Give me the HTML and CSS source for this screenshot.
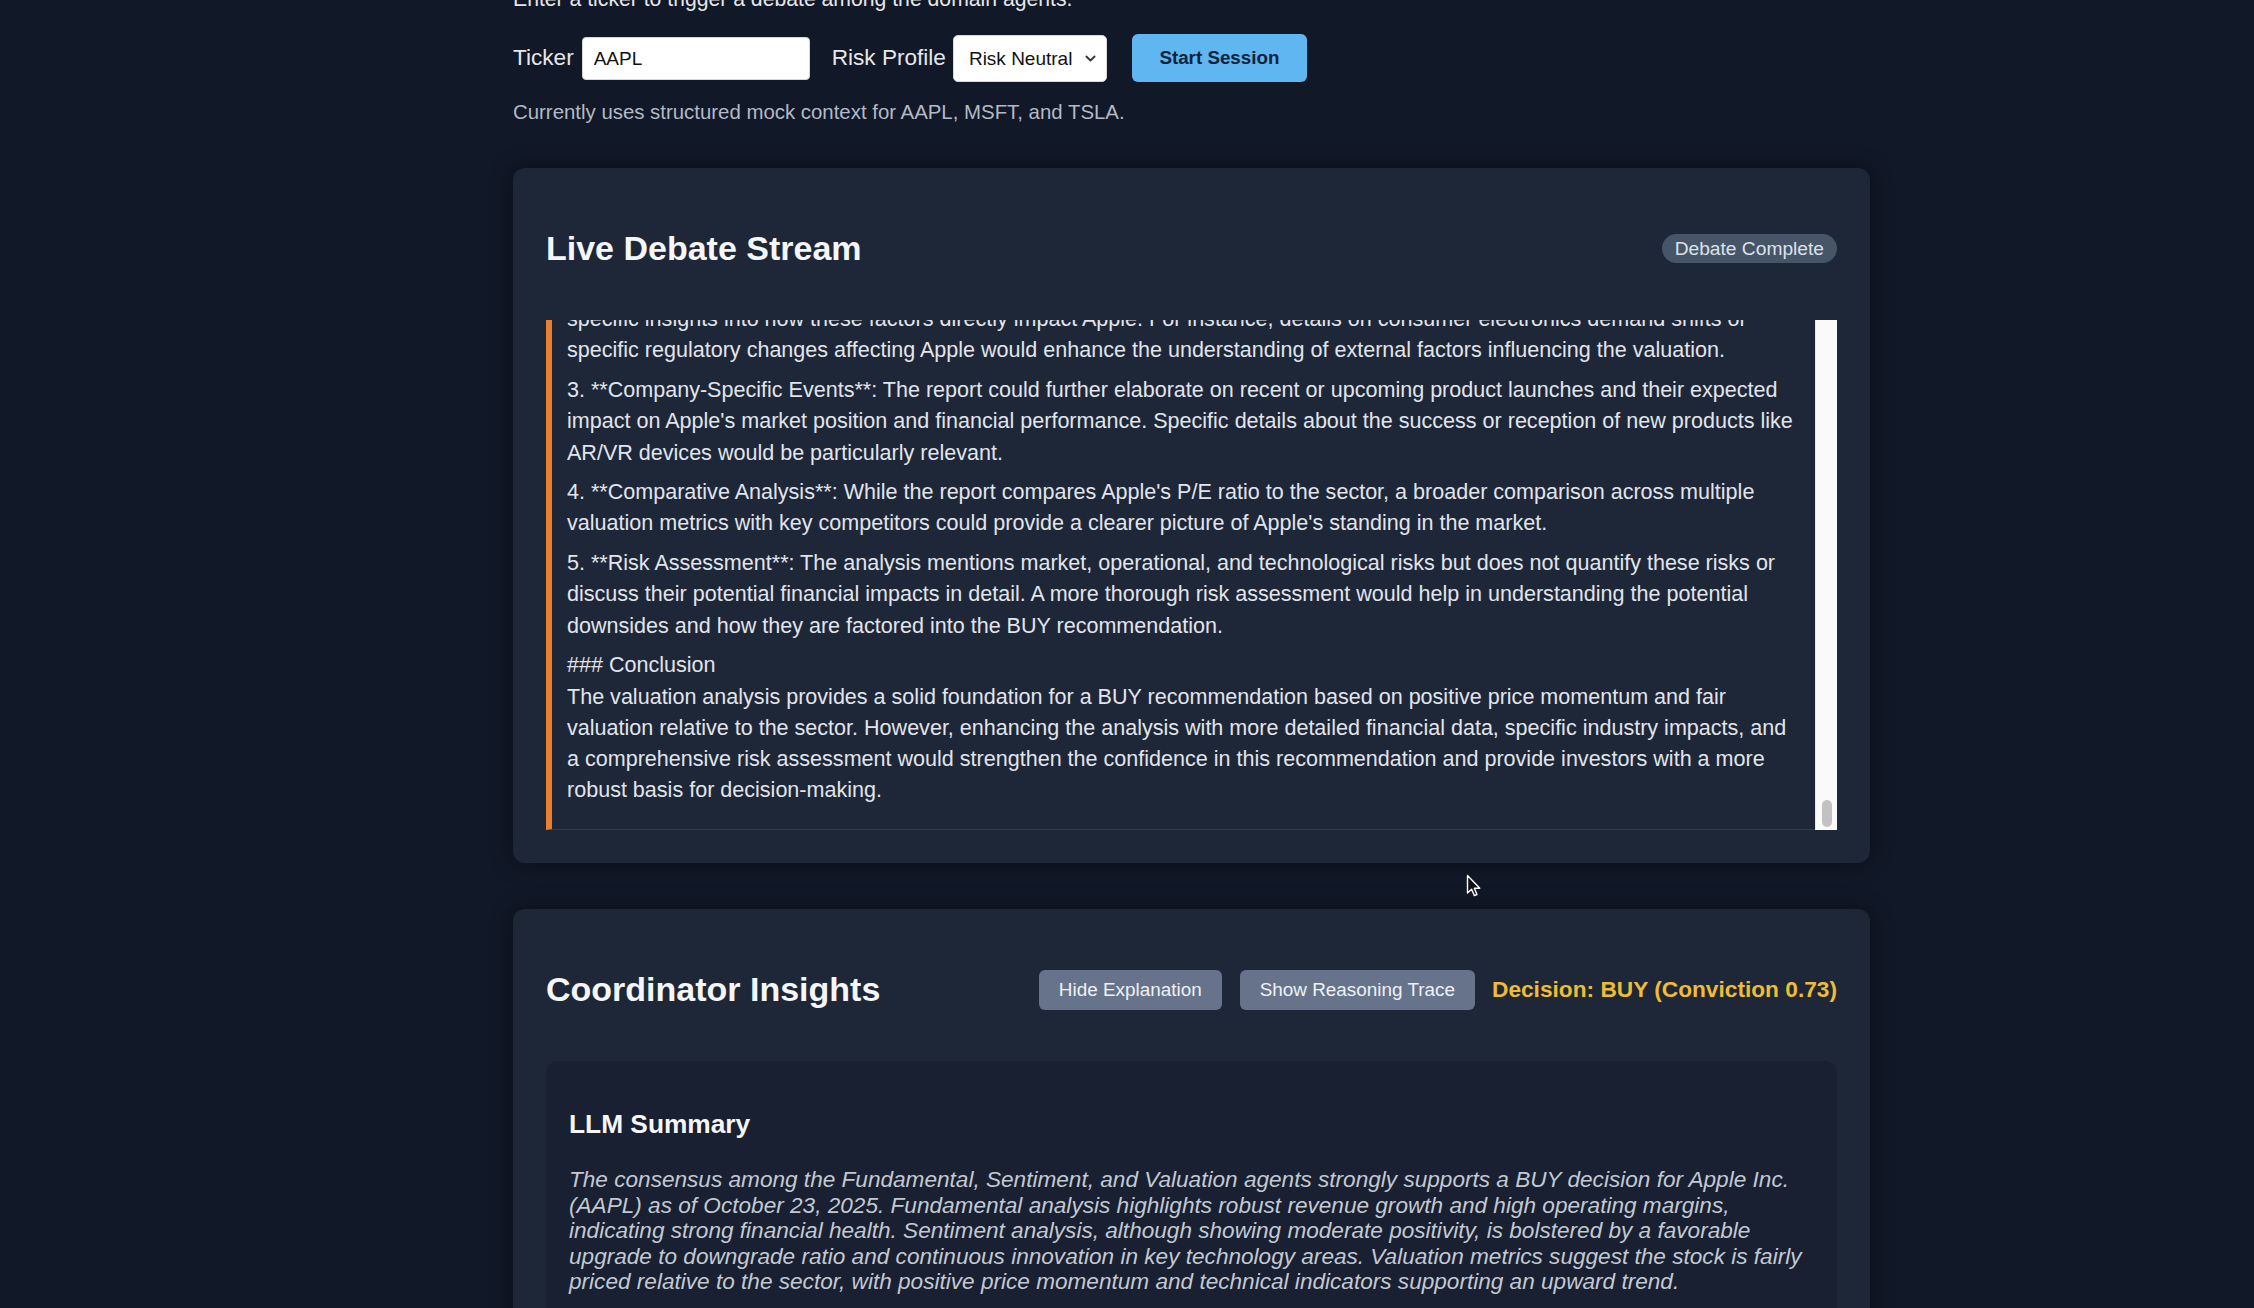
FILE: index.html
```html
<!DOCTYPE html>
<html lang="en">
<head>
<meta charset="utf-8">
<title>Debate Session</title>
<link rel="stylesheet" href="styles.css">
</head>
<body>
<main class="page">
  <p class="intro">Enter a ticker to trigger a debate among the domain agents.</p>
  <div class="controls">
    <label class="label" for="ticker">Ticker</label>
    <input id="ticker" class="input" type="text" value="AAPL">
    <label class="label label-risk" for="risk">Risk Profile</label>
    <div class="select">
      <select id="risk" class="select-native"><option>Risk Neutral</option></select>
      <svg class="chev" width="11" height="7" viewBox="0 0 11 7"><path d="M1.4 1.5 L5.5 5.5 L9.6 1.5" fill="none" stroke="#333" stroke-width="1.8" stroke-linecap="round" stroke-linejoin="round"/></svg>
    </div>
    <button class="btn-start">Start Session</button>
  </div>
  <p class="note">Currently uses structured mock context for AAPL, MSFT, and TSLA.</p>

  <section class="card">
    <header class="card-head">
      <h2 class="card-title">Live Debate Stream</h2>
      <span class="badge">Debate Complete</span>
    </header>
    <div class="stream">
      <div class="stream-content">
        <p>2. **Industry and Macroeconomic Impacts**: The report touches on macroeconomic conditions and industry trends but lacks<br>specific insights into how these factors directly impact Apple. For instance, details on consumer electronics demand shifts or specific regulatory changes affecting Apple would enhance the understanding of external factors influencing the valuation.</p>
        <p>3. **Company-Specific Events**: The report could further elaborate on recent or upcoming product launches and their expected impact on Apple's market position and financial performance. Specific details about the success or reception of new products like AR/VR devices would be particularly relevant.</p>
        <p>4. **Comparative Analysis**: While the report compares Apple's P/E ratio to the sector, a broader comparison across multiple valuation metrics with key competitors could provide a clearer picture of Apple's standing in the market.</p>
        <p>5. **Risk Assessment**: The analysis mentions market, operational, and technological risks but does not quantify these risks or discuss their potential financial impacts in detail. A more thorough risk assessment would help in understanding the potential downsides and how they are factored into the BUY recommendation.</p>
        <p class="pre">### Conclusion
The valuation analysis provides a solid foundation for a BUY recommendation based on positive price momentum and fair valuation relative to the sector. However, enhancing the analysis with more detailed financial data, specific industry impacts, and a comprehensive risk assessment would strengthen the confidence in this recommendation and provide investors with a more robust basis for decision-making.</p>
      </div>
      <div class="scrollbar"><div class="thumb"></div></div>
    </div>
  </section>

  <section class="card card-second">
    <header class="card-head">
      <h2 class="card-title">Coordinator Insights</h2>
      <div class="actions">
        <button class="btn-secondary">Hide Explanation</button>
        <button class="btn-secondary">Show Reasoning Trace</button>
        <span class="decision">Decision: BUY (Conviction 0.73)</span>
      </div>
    </header>
    <div class="summary">
      <h3 class="summary-title">LLM Summary</h3>
      <p class="summary-text">The consensus among the Fundamental, Sentiment, and Valuation agents strongly supports a BUY decision for Apple Inc. (AAPL) as of October 23, 2025. Fundamental analysis highlights robust revenue growth and high operating margins, indicating strong financial health. Sentiment analysis, although showing moderate positivity, is bolstered by a favorable upgrade to downgrade ratio and continuous innovation in key technology areas. Valuation metrics suggest the stock is fairly priced relative to the sector, with positive price momentum and technical indicators supporting an upward trend.</p>
    </div>
  </section>

  <svg class="cursor" width="16" height="24" viewBox="0 0 16 24"><path d="M1.5 1.5 L1.5 19 L5.6 15.2 L8.4 21.6 L11 20.5 L8.3 14.3 L13.8 14.3 Z" fill="#111" stroke="#fff" stroke-width="1.4" stroke-linejoin="round"/></svg>
</main>
</body>
</html>
```
FILE: styles.css
```css
html, body {
  margin: 0;
  padding: 0;
  background: #111827;
  height: 100%;
  overflow: hidden;
}
body {
  font-family: "Liberation Sans", Arial, Helvetica, sans-serif;
  color: #e5e7eb;
}
.page {
  position: relative;
  width: 1357px;
  margin-left: 513px;
}
.intro {
  margin: -17px 0 0;
  font-size: 21.2px;
  line-height: 31px;
  color: #e5e7eb;
}
.controls {
  display: flex;
  align-items: center;
  height: 48px;
  margin-top: 20px;
}
.label {
  font-size: 22.6px;
  color: #e5e7eb;
  margin-right: 8px;
}
.label-risk {
  margin-left: 22px;
  margin-right: 7px;
}
.input {
  box-sizing: border-box;
  width: 228px;
  height: 43px;
  margin-top: 1px;
  border: 1px solid #d6d6d6;
  border-radius: 4px;
  background: #fff;
  padding: 0 11px;
  font-family: "Liberation Sans", Arial, sans-serif;
  font-size: 19px;
  color: #111;
  outline: none;
}
.select {
  box-sizing: border-box;
  width: 154px;
  height: 47px;
  display: flex;
  align-items: center;
  background: #fff;
  border-radius: 5px;
  border: 1px solid #d9d9d9;
  padding: 0 10px 0 0;
}
.select-native {
  flex: 1;
  appearance: none;
  -webkit-appearance: none;
  border: none;
  background: transparent;
  font-family: "Liberation Sans", Arial, sans-serif;
  font-size: 19px;
  color: #111;
  padding: 0 0 0 15px;
  height: 100%;
  outline: none;
}
.chev {
  flex: none;
}
.btn-start {
  box-sizing: border-box;
  margin-left: 25px;
  width: 175px;
  height: 48px;
  border: none;
  border-radius: 6px;
  background: #5fb6f0;
  color: #10233a;
  font-family: "Liberation Sans", Arial, sans-serif;
  font-weight: bold;
  font-size: 18.8px;
}
.note {
  margin: 15px 0 0;
  font-size: 20.4px;
  line-height: 31px;
  color: #b3bac5;
}
.card {
  margin-top: 40px;
  background: #1e2738;
  border-radius: 12px;
  padding: 33px;
  box-shadow: 0 0 22px rgba(0, 0, 0, 0.45);
}
.card-second {
  margin-top: 46px;
}
.card-head {
  display: flex;
  align-items: center;
  justify-content: space-between;
}
.card-title {
  margin: 28px 0;
  font-size: 34px;
  line-height: 39px;
  font-weight: bold;
  color: #f5f6f8;
}
.badge {
  font-size: 19.2px;
  line-height: 21px;
  padding: 4px 13px;
  border-radius: 999px;
  background: #475569;
  color: #dde2ea;
}
.stream {
  display: flex;
  height: 510px;
  margin-top: 24px;
}
.stream-content {
  flex: 1;
  display: flex;
  flex-direction: column;
  justify-content: flex-end;
  overflow: hidden;
  border-left: 6px solid #e8802f;
  border-bottom: 1px solid #343e50;
  padding: 0 12px 15px 15px;
  font-size: 21.56px;
  line-height: 31.3px;
  color: #e1e5eb;
}
.stream-content p {
  margin: 0 0 8.3px;
  flex: none;
}
.stream-content .pre {
  white-space: pre-line;
}
.scrollbar {
  flex: none;
  width: 22px;
  background: #fafafa;
  border-left: 1px solid #e6e6e6;
  box-sizing: border-box;
  display: flex;
  flex-direction: column;
  justify-content: flex-end;
  align-items: center;
  padding-bottom: 3px;
}
.thumb {
  width: 10px;
  height: 27px;
  border-radius: 5px;
  background: #c2c2c2;
}
.actions {
  display: flex;
  align-items: center;
  gap: 18px;
}
.btn-secondary {
  height: 40px;
  padding: 0 20px;
  border: none;
  border-radius: 6px;
  background: #67738a;
  color: #eef1f5;
  font-family: "Liberation Sans", Arial, sans-serif;
  font-size: 18.9px;
}
.decision {
  margin-left: -1px;
  font-size: 22.7px;
  font-weight: bold;
  color: #efbd33;
}
.summary {
  margin-top: 24px;
  background: #182031;
  border-radius: 12px;
  padding: 23px;
}
.summary-title {
  margin: 25px 0 28px;
  font-size: 26.3px;
  line-height: 30px;
  font-weight: bold;
  color: #f5f6f8;
}
.summary-text {
  margin: 0;
  font-size: 22.6px;
  line-height: 25.5px;
  font-style: italic;
  color: #c3c9d2;
}
.cursor {
  position: absolute;
  left: 953px;
  top: 891px;
}
```
